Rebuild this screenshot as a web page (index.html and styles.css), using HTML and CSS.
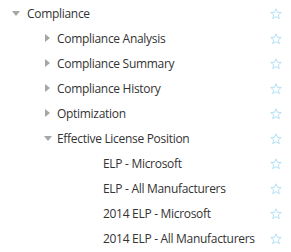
FILE: index.html
```html
<!DOCTYPE html>
<html lang="en">
<head>
    <meta charset="UTF-8">
    <title>Compliance</title>
    <link rel="stylesheet" href="styles.css">
</head>
<body>
    <ul class="tree">
        <li class="node lvl-0"><span class="toggle open"></span><span class="label">Compliance</span><span class="fav"><svg viewBox="0 0 12 12"><polygon points="6,0.8 7.5,4.3 11.2,4.5 8.3,6.9 9.3,10.7 6,8.6 2.7,10.7 3.7,6.9 0.8,4.5 4.5,4.3"/></svg></span></li>
        <li class="node lvl-1"><span class="toggle"></span><span class="label">Compliance Analysis</span><span class="fav"><svg viewBox="0 0 12 12"><polygon points="6,0.8 7.5,4.3 11.2,4.5 8.3,6.9 9.3,10.7 6,8.6 2.7,10.7 3.7,6.9 0.8,4.5 4.5,4.3"/></svg></span></li>
        <li class="node lvl-1"><span class="toggle"></span><span class="label">Compliance Summary</span><span class="fav"><svg viewBox="0 0 12 12"><polygon points="6,0.8 7.5,4.3 11.2,4.5 8.3,6.9 9.3,10.7 6,8.6 2.7,10.7 3.7,6.9 0.8,4.5 4.5,4.3"/></svg></span></li>
        <li class="node lvl-1"><span class="toggle"></span><span class="label">Compliance History</span><span class="fav"><svg viewBox="0 0 12 12"><polygon points="6,0.8 7.5,4.3 11.2,4.5 8.3,6.9 9.3,10.7 6,8.6 2.7,10.7 3.7,6.9 0.8,4.5 4.5,4.3"/></svg></span></li>
        <li class="node lvl-1"><span class="toggle"></span><span class="label">Optimization</span><span class="fav"><svg viewBox="0 0 12 12"><polygon points="6,0.8 7.5,4.3 11.2,4.5 8.3,6.9 9.3,10.7 6,8.6 2.7,10.7 3.7,6.9 0.8,4.5 4.5,4.3"/></svg></span></li>
        <li class="node lvl-1"><span class="toggle open"></span><span class="label">Effective License Position</span><span class="fav"><svg viewBox="0 0 12 12"><polygon points="6,0.8 7.5,4.3 11.2,4.5 8.3,6.9 9.3,10.7 6,8.6 2.7,10.7 3.7,6.9 0.8,4.5 4.5,4.3"/></svg></span></li>
        <li class="node lvl-2"><span class="label">ELP - Microsoft</span><span class="fav"><svg viewBox="0 0 12 12"><polygon points="6,0.8 7.5,4.3 11.2,4.5 8.3,6.9 9.3,10.7 6,8.6 2.7,10.7 3.7,6.9 0.8,4.5 4.5,4.3"/></svg></span></li>
        <li class="node lvl-2"><span class="label">ELP - All Manufacturers</span><span class="fav"><svg viewBox="0 0 12 12"><polygon points="6,0.8 7.5,4.3 11.2,4.5 8.3,6.9 9.3,10.7 6,8.6 2.7,10.7 3.7,6.9 0.8,4.5 4.5,4.3"/></svg></span></li>
        <li class="node lvl-2"><span class="label">2014 ELP - Microsoft</span><span class="fav"><svg viewBox="0 0 12 12"><polygon points="6,0.8 7.5,4.3 11.2,4.5 8.3,6.9 9.3,10.7 6,8.6 2.7,10.7 3.7,6.9 0.8,4.5 4.5,4.3"/></svg></span></li>
        <li class="node lvl-2"><span class="label">2014 ELP - All Manufacturers</span><span class="fav"><svg viewBox="0 0 12 12"><polygon points="6,0.8 7.5,4.3 11.2,4.5 8.3,6.9 9.3,10.7 6,8.6 2.7,10.7 3.7,6.9 0.8,4.5 4.5,4.3"/></svg></span></li>
    </ul>
</body>
</html>
```

FILE: styles.css
```css
body {
    margin: 0;
    background-color: #fff;
    font-family: "Open Sans", "Noto Sans", sans-serif;
    font-size: 12px;
    letter-spacing: -0.3px;
    color: #333;
}

.tree {
    list-style: none;
    margin: 0;
    padding: 1px 0 0 0;
}

.node {
    display: flex;
    align-items: center;
    height: 25px;
}

.lvl-0 { padding-left: 12px; }
.lvl-1 { padding-left: 44px; }
.lvl-2 { padding-left: 103px; }

.toggle {
    width: 15px;
    height: 9px;
    flex: none;
    position: relative;
}

.toggle::before {
    content: "";
    position: absolute;
    left: 1px;
    top: 0;
    border-style: solid;
    border-width: 4.5px 0 4.5px 5px;
    border-color: transparent transparent transparent #a6a6a6;
}

.toggle.open::before {
    left: 0;
    top: 2px;
    border-width: 5px 4.5px 0 4.5px;
    border-color: #a6a6a6 transparent transparent transparent;
}

.lvl-1 .toggle { width: 13px; }

.label {
    flex: 1;
    white-space: nowrap;
}

.fav {
    width: 12px;
    height: 12px;
    margin-right: 9px;
    flex: none;
}

.fav svg {
    display: block;
    width: 12px;
    height: 12px;
    fill: none;
    stroke: #a9dcf5;
    stroke-width: 0.9;
}
```
